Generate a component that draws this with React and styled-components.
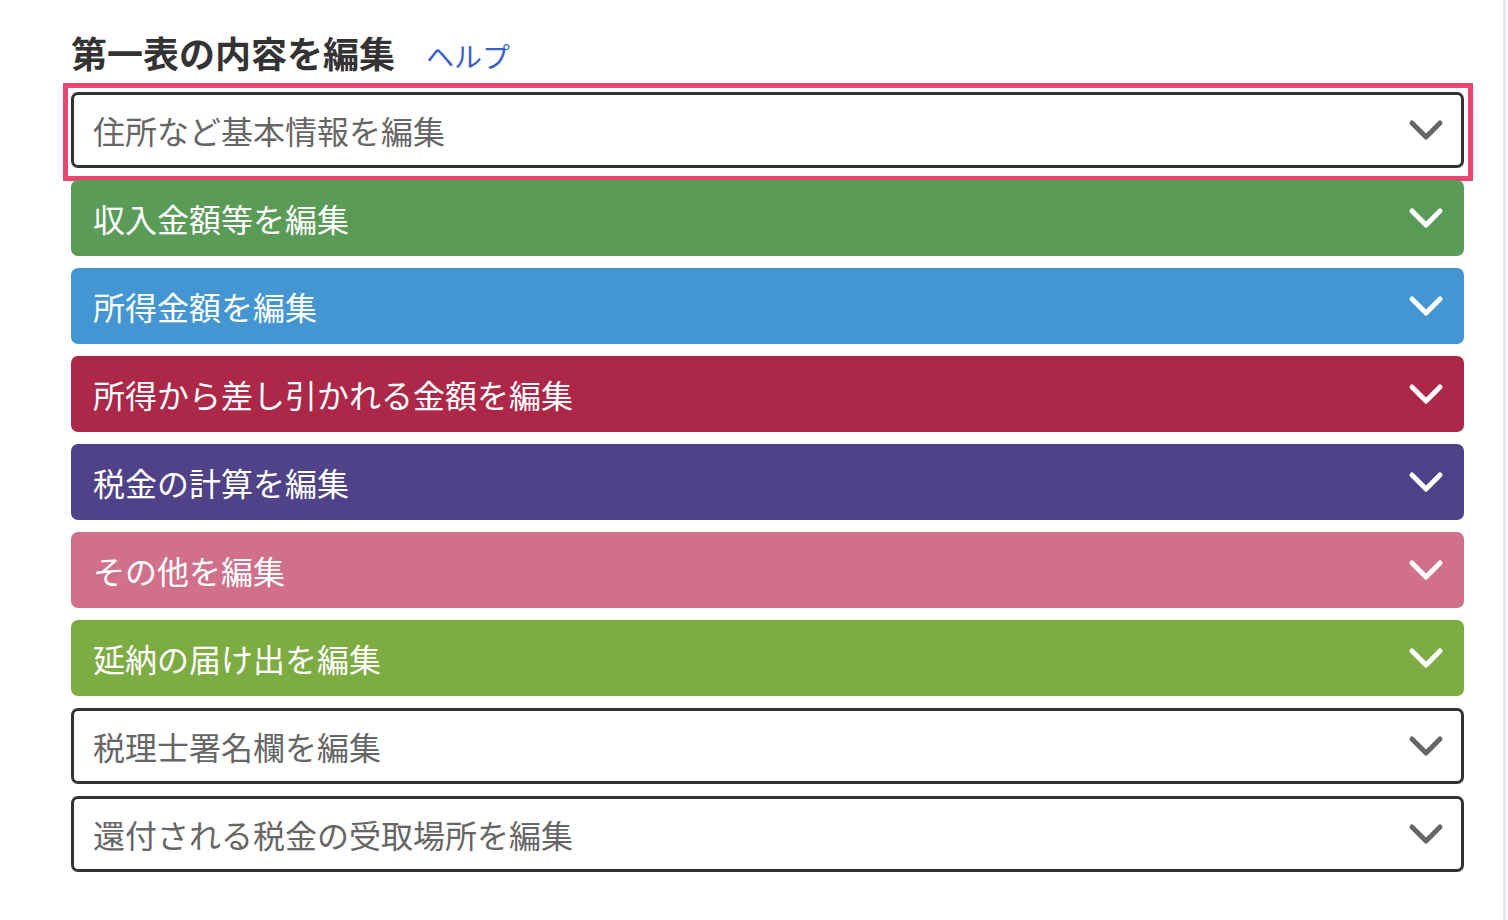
import React from 'react'
import styled, { createGlobalStyle } from 'styled-components'

const GlobalStyle = createGlobalStyle`
  html, body {
    margin: 0;
    padding: 0;
    background: #fff;
  }
  body {
    font-family: 'Noto Sans CJK JP', 'Noto Sans', sans-serif;
  }
`

const Page = styled.div`
  box-sizing: border-box;
  width: 1506px;
  height: 920px;
  border-right: 3px solid #e4e7f1;
  padding: 27px 0 0 71px;
`

const Panel = styled.div`
  width: 1393px;
`

const Header = styled.div`
  display: flex;
  align-items: baseline;
  gap: 31px;
  margin-bottom: 15px;
`

const Title = styled.h2`
  margin: 0;
  font-size: 36px;
  font-weight: 700;
  color: #333;
  line-height: 50px;
`

const HelpLink = styled.a`
  font-size: 28px;
  color: #3a5fcd;
  text-decoration: none;
  cursor: pointer;
`

const List = styled.div`
  display: flex;
  flex-direction: column;
  gap: 12px;
`

const Item = styled.button`
  position: relative;
  box-sizing: border-box;
  height: 76px;
  width: 100%;
  display: flex;
  align-items: center;
  justify-content: space-between;
  border-radius: 7px;
  border: ${p => (p.$color ? 'none' : '3px solid #333')};
  background: ${p => p.$color || '#fff'};
  color: ${p => (p.$color ? '#fff' : '#666')};
  font-family: inherit;
  font-size: 32px;
  cursor: pointer;
  padding-left: ${p => (p.$color ? '22px' : '19px')};
  padding-right: ${p => (p.$color ? '20px' : '17px')};

  ${p => p.$focused && `
    &::after {
      content: '';
      position: absolute;
      top: -12px;
      bottom: -16px;
      left: -11px;
      right: -12px;
      border: 5px solid #e8466f;
      pointer-events: none;
    }
  `}
`

const Label = styled.span`
  line-height: 1;
`

const Chevron = ({ color }) => (
  <svg width="36" height="24" viewBox="0 0 36 24">
    <path
      d="M4 5 L18 19 L32 5"
      fill="none"
      stroke={color}
      strokeWidth="5"
      strokeLinecap="round"
      strokeLinejoin="round"
    />
  </svg>
)

const sections = [
  { label: '住所など基本情報を編集', focused: true },
  { label: '収入金額等を編集', color: '#5a9b58' },
  { label: '所得金額を編集', color: '#4396d1' },
  { label: '所得から差し引かれる金額を編集', color: '#ad2748' },
  { label: '税金の計算を編集', color: '#4f4288' },
  { label: 'その他を編集', color: '#d0708a' },
  { label: '延納の届け出を編集', color: '#7dac43' },
  { label: '税理士署名欄を編集' },
  { label: '還付される税金の受取場所を編集' },
]

export default function App() {
  return (
    <>
      <GlobalStyle />
      <Page>
        <Panel>
          <Header>
            <Title>第一表の内容を編集</Title>
            <HelpLink>ヘルプ</HelpLink>
          </Header>
          <List>
            {sections.map(s => (
              <Item key={s.label} $color={s.color} $focused={s.focused}>
                <Label>{s.label}</Label>
                <Chevron color={s.color ? '#fff' : '#666'} />
              </Item>
            ))}
          </List>
        </Panel>
      </Page>
    </>
  )
}
